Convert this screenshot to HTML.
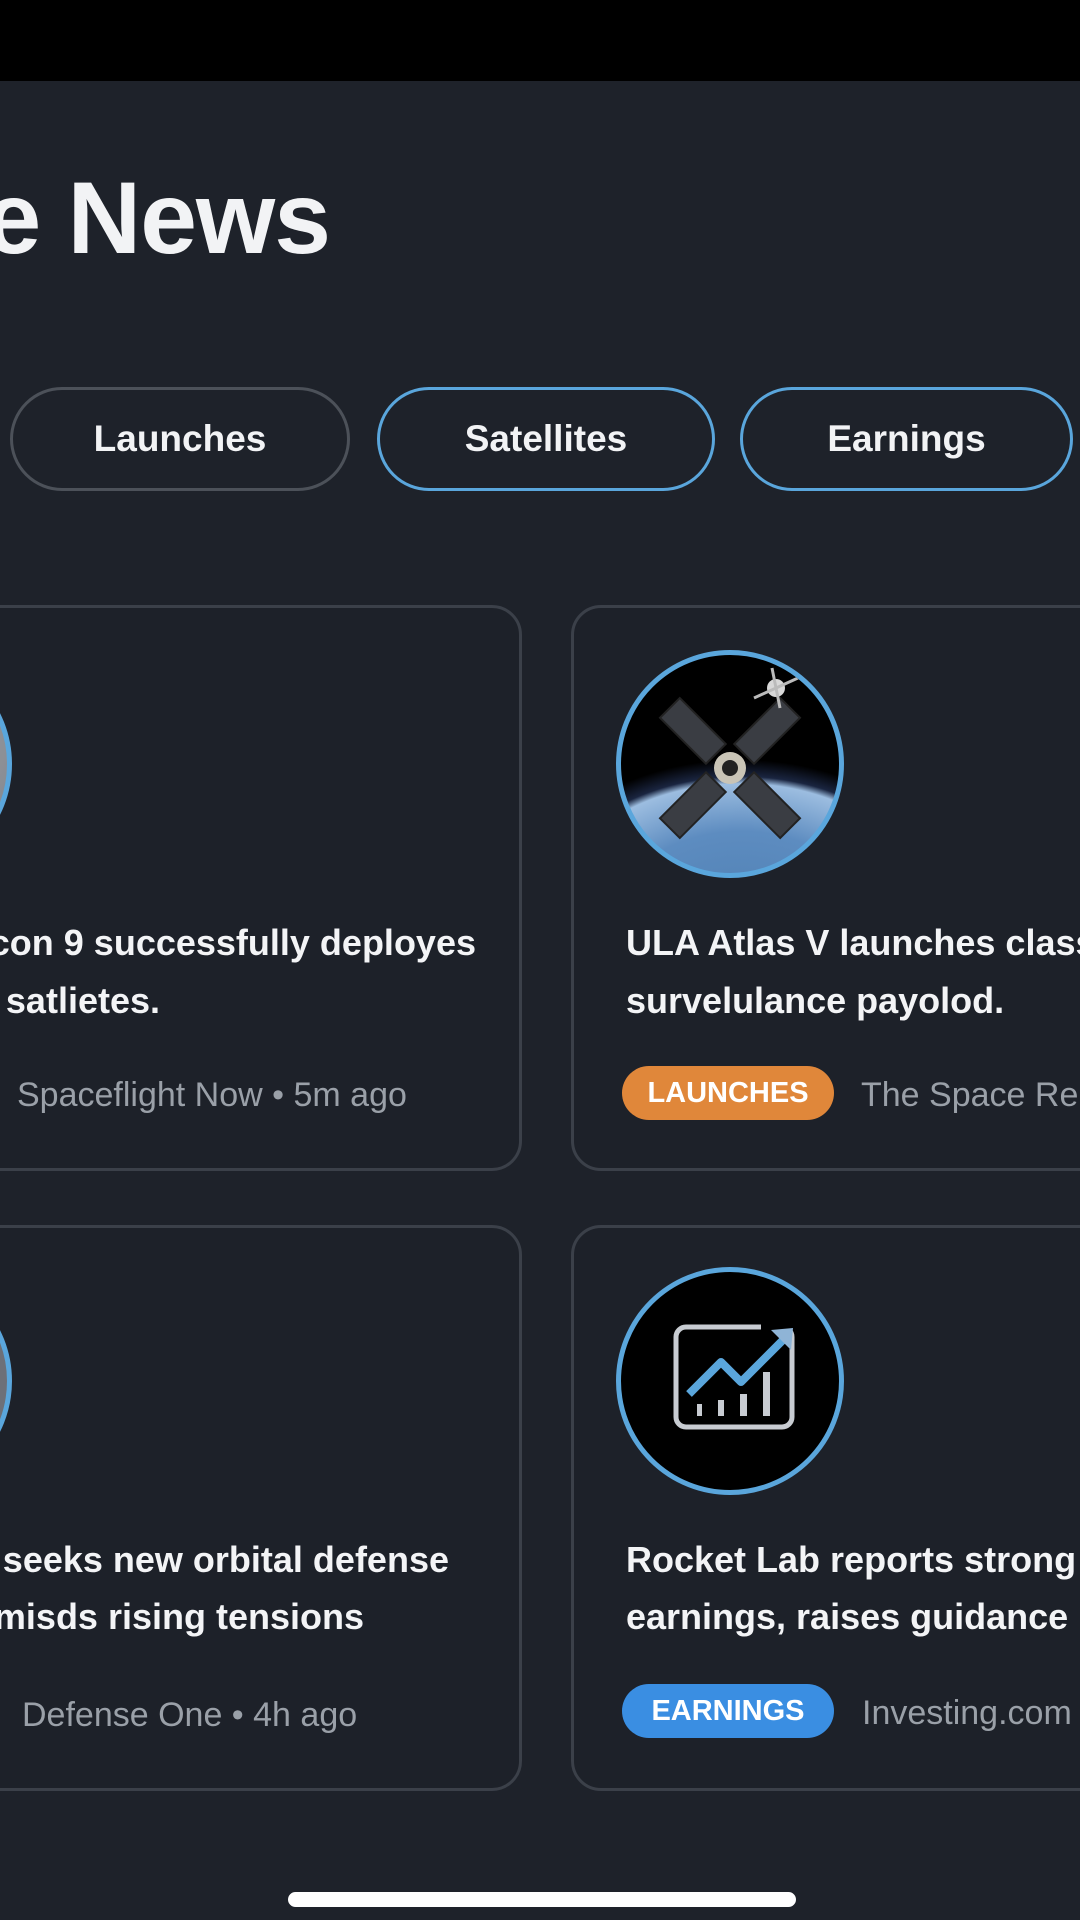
<!DOCTYPE html>
<html><head><meta charset="utf-8">
<style>
*{margin:0;padding:0;box-sizing:border-box}
html,body{width:1080px;height:1920px;overflow:hidden}
body{background:#1e222a;position:relative;font-family:"Liberation Sans",sans-serif;color:#f2f3f5}
.top{position:absolute;left:0;top:0;width:1080px;height:81px;background:#000}
.title{position:absolute;right:750px;top:160px;font-size:102px;font-weight:bold;white-space:nowrap;letter-spacing:-1px}
.chip{position:absolute;top:387px;height:104px;border-radius:52px;border:3px solid #5aa6dc;font-size:37px;font-weight:bold;display:flex;align-items:center;justify-content:center;color:#f2f3f5}
.card{position:absolute;width:783px;height:566px;border:3px solid #3b4049;border-radius:30px;background:#1d2129}
.av{position:absolute;width:228px;height:228px;border-radius:50%;border:5px solid #5aa6dc;overflow:hidden}
.hl{position:absolute;font-size:36px;font-weight:bold;white-space:nowrap;color:#f3f4f6}
.meta{position:absolute;font-size:34px;color:#9aa0a8;white-space:nowrap}
.badge{position:absolute;width:212px;height:54px;border-radius:27px;font-size:29px;font-weight:bold;color:#fff;display:flex;align-items:center;justify-content:center}
</style></head><body>
<div class="top"></div>
<div class="title">Space News</div>
<div class="chip" style="left:10px;width:340px;border-color:#4c5159">Launches</div>
<div class="chip" style="left:377px;width:338px">Satellites</div>
<div class="chip" style="left:740px;width:333px">Earnings</div>

<div class="card" style="left:-261px;top:605px"></div>
<div class="av" style="left:-216px;top:650px;background:radial-gradient(circle at 70% 40%,#9a9ea4,#6d7078)"></div>
<div class="hl" style="right:604px;top:922px">SpaceX Falcon 9 successfully deployes</div>
<div class="hl" style="right:920px;top:980px">Starlink satlietes.</div>
<div class="meta" style="left:17px;top:1076px">Spaceflight Now • 5m ago</div>

<div class="card" style="left:571px;top:605px"></div>
<div class="av" style="left:616px;top:650px;background:radial-gradient(ellipse 150% 110% at 55% 125%,#4e7fb2 0%,#5d8cc0 40%,#9cbde0 60%,#1a2540 63%,#000 70%)">
<svg width="228" height="228" viewBox="0 0 228 228" style="position:absolute;left:-5px;top:-5px">
<g transform="translate(114,118) rotate(45)">
<rect x="-85" y="-14" width="65" height="28" fill="#3a3d43" stroke="#222" stroke-width="2"/>
<rect x="20" y="-14" width="65" height="28" fill="#3a3d43" stroke="#222" stroke-width="2"/>
<rect x="-14" y="-85" width="28" height="65" fill="#3a3d43" stroke="#222" stroke-width="2"/>
<rect x="-14" y="20" width="28" height="65" fill="#3a3d43" stroke="#222" stroke-width="2"/>
<circle r="16" fill="#c9c4b6"/><circle r="8" fill="#222"/>
</g>
<g transform="translate(160,38)"><circle r="9" fill="#d8d8d8"/><path d="M-22 10L22-10M-4-20L4 20" stroke="#bbb" stroke-width="3"/></g>
</svg></div>
<div class="hl" style="left:626px;top:922px">ULA Atlas V launches classified</div>
<div class="hl" style="left:626px;top:980px">survelulance payolod.</div>
<div class="badge" style="left:622px;top:1066px;background:#e0873a">LAUNCHES</div>
<div class="meta" style="left:861px;top:1076px">The Space Report • 1h ago</div>

<div class="card" style="left:-261px;top:1225px"></div>
<div class="av" style="left:-216px;top:1267px;background:#6d7078"></div>
<div class="hl" style="right:631px;top:1539px">Pentagon seeks new orbital defense</div>
<div class="hl" style="right:716px;top:1596px">systems amisds rising tensions</div>
<div class="meta" style="left:22px;top:1696px">Defense One • 4h ago</div>

<div class="card" style="left:571px;top:1225px"></div>
<div class="av" style="left:616px;top:1267px;background:#000">
<svg width="218" height="218" viewBox="0 0 218 218">
<rect x="55" y="55" width="116" height="100" rx="10" fill="none" stroke="#c8ccd2" stroke-width="5"/>
<rect x="140" y="48" width="30" height="12" fill="#000"/>
<path d="M68 122L100 90L120 110L166 64" fill="none" stroke="#5aa6dc" stroke-width="8" stroke-linejoin="round"/>
<path d="M150 58L172 56L170 78Z" fill="#8fb4d6"/>
<rect x="76" y="132" width="5" height="12" fill="#c8ccd2"/>
<rect x="97" y="128" width="6" height="16" fill="#c8ccd2"/>
<rect x="119" y="122" width="7" height="22" fill="#c8ccd2"/>
<rect x="142" y="100" width="7" height="44" fill="#c8ccd2"/>
</svg></div>
<div class="hl" style="left:626px;top:1539px">Rocket Lab reports strong Q3</div>
<div class="hl" style="left:626px;top:1596px">earnings, raises guidance</div>
<div class="badge" style="left:622px;top:1684px;background:#3a8ee2">EARNINGS</div>
<div class="meta" style="left:862px;top:1694px">Investing.com • 6h ago</div>

<div style="position:absolute;left:288px;top:1892px;width:508px;height:15px;border-radius:8px;background:#fff"></div>
</body></html>
